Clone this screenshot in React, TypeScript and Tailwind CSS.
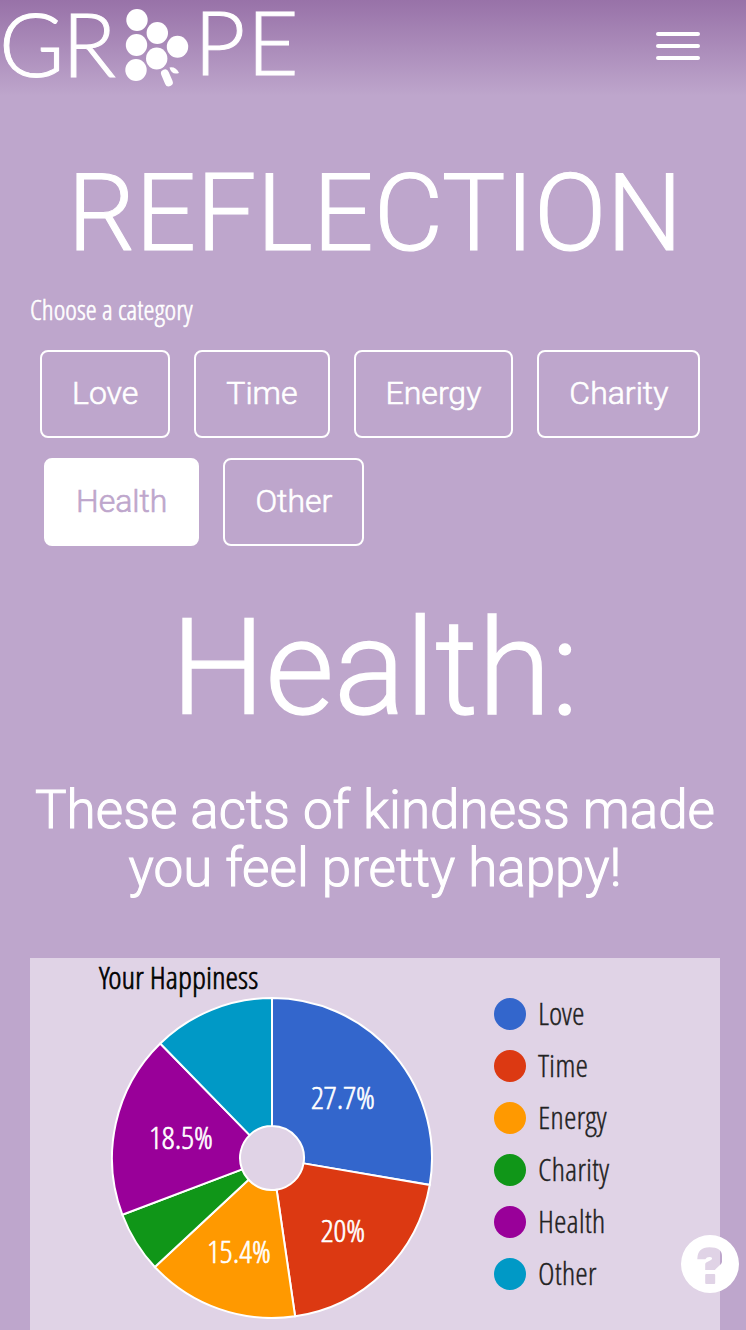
import { useState } from "react";

type Category = { name: string; count: number; color: string; dot: string };

const categories: Category[] = [
  { name: "Love", count: 18, color: "#3366cc", dot: "bg-[#3366cc]" },
  { name: "Time", count: 13, color: "#dc3912", dot: "bg-[#dc3912]" },
  { name: "Energy", count: 10, color: "#ff9900", dot: "bg-[#ff9900]" },
  { name: "Charity", count: 4, color: "#109618", dot: "bg-[#109618]" },
  { name: "Health", count: 12, color: "#990099", dot: "bg-[#990099]" },
  { name: "Other", count: 8, color: "#0099c6", dot: "bg-[#0099c6]" },
];

const condensed =
  "font-['Open_Sans_Condensed_Light','Open_Sans_Condensed','Liberation_Sans_Narrow',sans-serif]";
const heavier = "[-webkit-text-stroke:0.02em_currentColor]";
const slightlyHeavier = "[-webkit-text-stroke:0.01em_currentColor]";

function Logo() {
  return (
    <svg viewBox="0 0 300 92" className="h-[92px] w-[300px] overflow-visible" fill="#fff" role="img" aria-label="Grape">
      <g className="font-['Lato'] font-light" fontSize="89" stroke="#fff" strokeWidth="1">
        <text x="-1" y="77">G</text>
        <text x="62" y="77">R</text>
        <text x="194" y="75">P</text>
        <text x="247" y="75">E</text>
      </g>
      <ellipse cx="137" cy="20" rx="10.7" ry="11" />
      <ellipse cx="157.300" cy="33" rx="10.700" ry="11" />
      <ellipse cx="136.500" cy="45" rx="10.700" ry="11" />
      <ellipse cx="177.500" cy="46.700" rx="10.700" ry="11" />
      <ellipse cx="156.700" cy="58.500" rx="10.700" ry="11" />
      <ellipse cx="136" cy="70" rx="10.700" ry="11" />
      <path d="M165 73.500L168.800 82.300" stroke="#fff" strokeWidth="8" strokeLinecap="round" />
      <path d="M169.500 67.500Q176 66.500 179 73Q171.500 75.500 169.500 67.500Z" />
    </svg>
  );
}

function Pie() {
  const total = categories.reduce((sum, c) => sum + c.count, 0);
  const at = (turn: number, r: number) => {
    const a = turn * 2 * Math.PI;
    return `${161 + r * Math.sin(a)} ${161 - r * Math.cos(a)}`;
  };
  let start = 0;
  const slices = categories.map((c) => {
    const from = start;
    const to = start + c.count / total;
    start = to;
    return { ...c, d: `M${at(from, 32)}L${at(from, 160)}A160 160 0 0 1 ${at(to, 160)}L${at(to, 32)}A32 32 0 0 0 ${at(from, 32)}Z` };
  });
  return (
    <svg viewBox="0 0 322 322" className="ml-3 h-[322px] w-[322px]" role="img" aria-label="Your Happiness">
      {slices.map((s) => (
        <path key={s.name} d={s.d} fill={s.color} stroke="#fff" strokeWidth="2" />
      ))}
      <g className={condensed} fontSize="32" fill="#fff" stroke="#fff" strokeWidth="0.6" textAnchor="middle">
        <text x="232" y="112">27.7%</text>
        <text x="232" y="245">20%</text>
        <text x="128" y="266">15.4%</text>
        <text x="70" y="152">18.5%</text>
      </g>
    </svg>
  );
}

export default function App() {
  const [selected, setSelected] = useState("Health");
  const rows = [
    { pad: "pl-2.5", items: categories.slice(0, 4) },
    { pad: "pl-3.5", items: categories.slice(4) },
  ];
  return (
    <div className="flex min-h-screen flex-col bg-[#bea6cc] font-['Roboto',sans-serif] font-light text-white">
      <header className="flex h-24 items-start justify-between bg-linear-to-b from-[#9872a8] to-[#bea6cc] pr-[46px]">
        <a href="#">
          <Logo />
        </a>
        <button aria-label="Menu" className="mt-8 flex w-11 flex-col gap-2">
          <span className="h-1 rounded-xs bg-white" />
          <span className="h-1 rounded-xs bg-white" />
          <span className="h-1 rounded-xs bg-white" />
        </button>
      </header>
      <main className="flex grow flex-col pr-[26px] pl-[30px]">
        <h1 className={`mt-[54px] text-center text-[107px] leading-[128px] ${slightlyHeavier}`}>REFLECTION</h1>
        <p className={`mt-[9px] text-[28px] leading-11 ${condensed} ${heavier}`}>Choose a category</p>
        <div className="mt-[19px] flex flex-col gap-5">
          {rows.map((row) => (
            <div key={row.pad} className={`flex gap-6 ${row.pad}`}>
              {row.items.map((c) => (
                <button
                  key={c.name}
                  onClick={() => setSelected(c.name)}
                  className={`h-[88px] rounded-lg border-2 border-white px-[30px] pb-0.5 text-[32px] ${heavier} ${
                    selected === c.name ? "bg-white text-[#bea6cc]" : "text-white"
                  }`}
                >
                  {c.name}
                </button>
              ))}
            </div>
          ))}
        </div>
        <h2 className={`mt-[43px] text-center text-[133px] leading-[160px] ${slightlyHeavier}`}>{selected}:</h2>
        <p className={`mt-8 text-center text-[53px] leading-[58px] ${heavier}`}>
          These acts of kindness made you feel pretty happy!
        </p>
        <section className="mt-[61px] flex grow bg-[#e0d3e6]">
          <div className="pl-[69px]">
            <h3 className={`h-[39px] text-[32px] leading-[38px] text-black ${condensed} ${heavier}`}>Your Happiness</h3>
            <Pie />
          </div>
          <ul className="ml-[61px] flex flex-col gap-5 pt-10">
            {categories.map((c) => (
              <li
                key={c.name}
                className={`flex h-8 items-center gap-3 text-[32px] text-[#222] ${condensed} ${slightlyHeavier}`}
              >
                <span className={`size-8 rounded-full ${c.dot}`} />
                <span className="pb-0.5">{c.name}</span>
              </li>
            ))}
          </ul>
        </section>
      </main>
      <button aria-label="Help" className="fixed right-[7px] bottom-[37px] size-[58px]">
        <svg viewBox="0 0 58 58" className="size-full" fill="#fff">
          <path
            fillRule="evenodd"
            d="M29 0A29 29 0 1 1 29 58A29 29 0 1 1 29 0ZM16.300 24.300Q16.300 12.300 28.500 12.300Q41 12.300 41 21V26.500Q41 28 39.800 29.200L34.200 34.500V35H24.200V29.500Q24.200 28.300 25.200 27.600L30 25Q31.500 24 31 23Q30.500 22 28.500 22Q25.500 22 24.300 24.300ZM25.200 39H33.200Q34.200 39 34.200 40V48Q34.200 49 33.200 49H25.200Q24.200 49 24.200 48V40Q24.200 39 25.200 39Z"
          />
        </svg>
      </button>
    </div>
  );
}
